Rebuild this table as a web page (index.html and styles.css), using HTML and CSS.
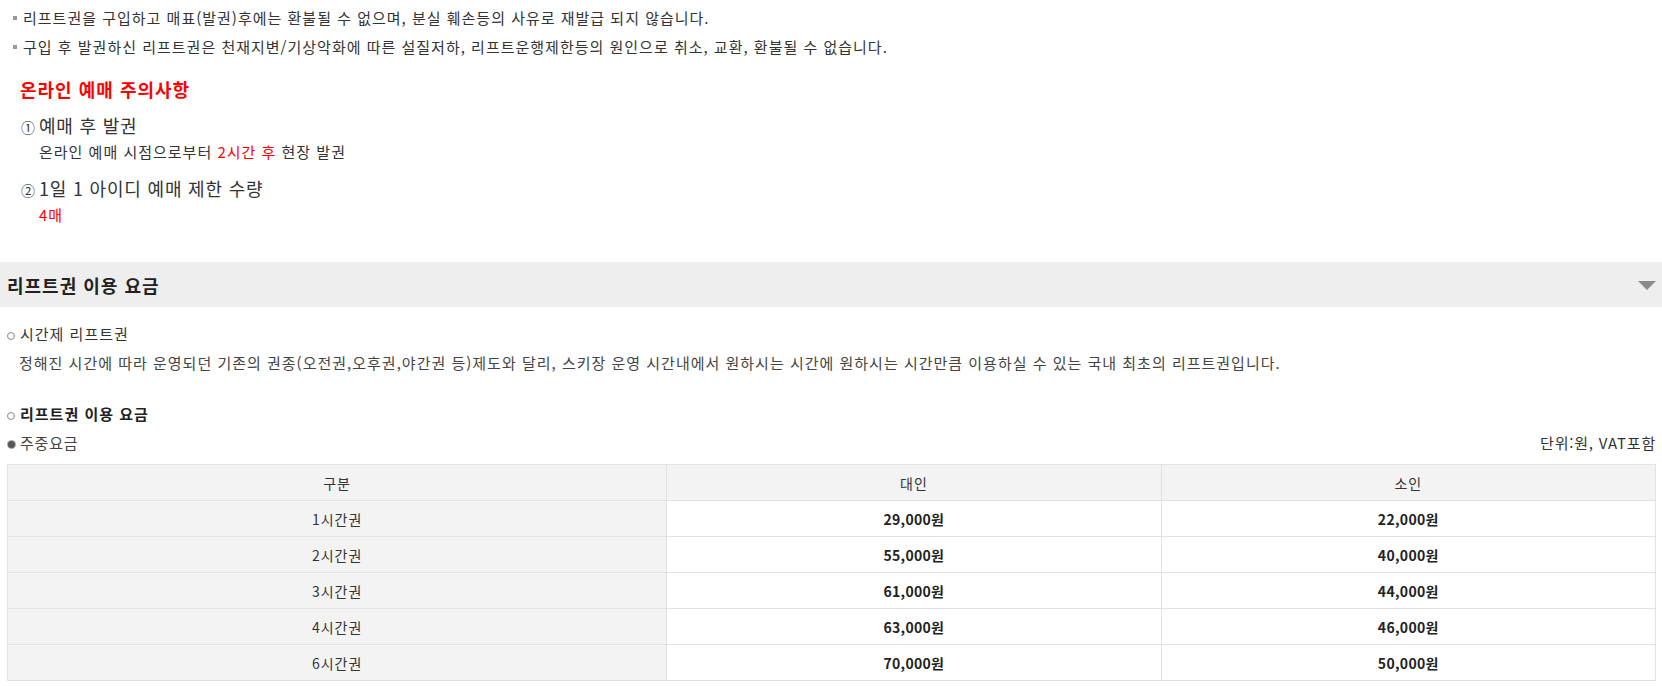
FILE: index.html
```html
<!DOCTYPE html>
<html lang="ko">
<head>
<meta charset="utf-8">
<title>리프트권 이용 요금</title>
<link rel="stylesheet" href="styles.css">
</head>
<body>
<div class="page">
  <ul class="notice">
    <li>리프트권을 구입하고 매표(발권)후에는 환불될 수 없으며, 분실 훼손등의 사유로 재발급 되지 않습니다.</li>
    <li>구입 후 발권하신 리프트권은 천재지변/기상악화에 따른 설질저하, 리프트운행제한등의 원인으로 취소, 교환, 환불될 수 없습니다.</li>
  </ul>

  <h3 class="warn-title">온라인 예매 주의사항</h3>
  <div class="warn-item">
    <p class="warn-head"><span class="num">①</span>예매 후 발권</p>
    <p class="warn-desc">온라인 예매 시점으로부터 <span class="red">2시간 후</span> 현장 발권</p>
  </div>
  <div class="warn-item">
    <p class="warn-head"><span class="num">②</span>1일 1 아이디 예매 제한 수량</p>
    <p class="warn-desc"><span class="red">4매</span></p>
  </div>

  <div class="section-bar">
    <h2 class="section-title">리프트권 이용 요금</h2>
    <span class="caret"></span>
  </div>

  <p class="ring-title"><span class="ring"></span>시간제 리프트권</p>
  <p class="desc">정해진 시간에 따라 운영되던 기존의 권종(오전권,오후권,야간권 등)제도와 달리, 스키장 운영 시간내에서 원하시는 시간에 원하시는 시간만큼 이용하실 수 있는 국내 최초의 리프트권입니다.</p>

  <p class="ring-title strong"><span class="ring"></span>리프트권 이용 요금</p>
  <div class="table-head">
    <span class="sub-title"><span class="dot"></span>주중요금</span>
    <span class="unit">단위:원, VAT포함</span>
  </div>

  <table class="price">
    <colgroup>
      <col class="c1"><col class="c2"><col class="c3">
    </colgroup>
    <thead>
      <tr><th>구분</th><th>대인</th><th>소인</th></tr>
    </thead>
    <tbody>
      <tr><th>1시간권</th><td>29,000원</td><td>22,000원</td></tr>
      <tr><th>2시간권</th><td>55,000원</td><td>40,000원</td></tr>
      <tr><th>3시간권</th><td>61,000원</td><td>44,000원</td></tr>
      <tr><th>4시간권</th><td>63,000원</td><td>46,000원</td></tr>
      <tr><th>6시간권</th><td>70,000원</td><td>50,000원</td></tr>
    </tbody>
  </table>
</div>
</body>
</html>
```

FILE: styles.css
```css
* { box-sizing: border-box; }
html, body { margin: 0; padding: 0; background: #fff; }
body {
  font-family: "Noto Sans CJK KR", "Noto Sans", sans-serif;
  font-size: 15px;
  letter-spacing: 1px;
  color: #333;
}
p, h2, h3, ul { margin: 0; padding: 0; }

.page { padding: 3px 6px 0 7px; }

.notice { list-style: none; }
.notice li {
  position: relative;
  padding-left: 16px;
  line-height: 29px;
}
.notice li::before {
  content: "";
  position: absolute;
  left: 6px;
  top: 13px;
  width: 4px;
  height: 4px;
  background: #999;
}

.warn-title {
  margin: 15px 0 0 13px;
  font-size: 18px;
  line-height: 26px;
  font-weight: bold;
  color: #f00;
}
.warn-item { margin-left: 14px; }
.warn-head {
  margin-top: 9px;
  font-size: 18px;
  line-height: 28px;
  letter-spacing: 0.8px;
  color: #333;
}
.warn-item + .warn-item .warn-head { margin-top: 11px; }
.num {
  display: inline-block;
  width: 18px;
  font-size: 14px;
  letter-spacing: 0;
  color: #333;
}
.warn-desc {
  padding-left: 18px;
  line-height: 22px;
}
.red { color: #f00; }

.section-bar {
  display: flex;
  align-items: center;
  justify-content: space-between;
  height: 45px;
  margin: 36px -6px 0 -7px;
  padding: 0 6px 0 7px;
  background: #eee;
}
.section-title {
  font-size: 18px;
  font-weight: bold;
  color: #222;
}
.caret {
  width: 0;
  height: 0;
  border-left: 9px solid transparent;
  border-right: 9px solid transparent;
  border-top: 9px solid #8a8a8a;
  margin-top: 2px;
}

.ring-title {
  display: flex;
  align-items: center;
  margin-top: 13px;
  line-height: 28px;
  color: #333;
}
.ring-title.strong {
  margin-top: 23px;
  font-weight: bold;
  color: #222;
}
.ring {
  display: inline-block;
  width: 8px;
  height: 8px;
  margin: 3px 5px 0 0;
  border: 1.5px solid #888;
  border-radius: 50%;
}
.desc {
  margin-top: 1px;
  padding-left: 12px;
  line-height: 28px;
  color: #444;
}

.table-head {
  display: flex;
  justify-content: space-between;
  align-items: center;
  margin-top: 1px;
  line-height: 28px;
}
.sub-title { display: flex; align-items: center; color: #444; letter-spacing: 0.8px; }
.dot {
  display: inline-block;
  width: 7px;
  height: 7px;
  margin: 3px 5px 0 1px;
  border-radius: 50%;
  background: #555;
  box-shadow: 0 0 0 1px #aaa;
}
.unit { color: #333; letter-spacing: 0.8px; }

.price {
  width: 100%;
  margin-top: 7px;
  border-collapse: collapse;
  border: 1px solid #ccc;
  font-size: 14px;
  table-layout: fixed;
}
.price col.c1 { width: 40%; }
.price col.c2 { width: 30%; }
.price col.c3 { width: 30%; }
.price th, .price td {
  height: 36px;
  padding: 0;
  text-align: center;
  border: 1px solid #e2e2e2;
  color: #333;
}
.price thead th { background: #f3f3f3; font-weight: normal; }
.price tbody th { background: #f3f3f3; font-weight: normal; }
.price tbody td { background: #fff; font-weight: bold; color: #222; letter-spacing: 0.3px; }
```
